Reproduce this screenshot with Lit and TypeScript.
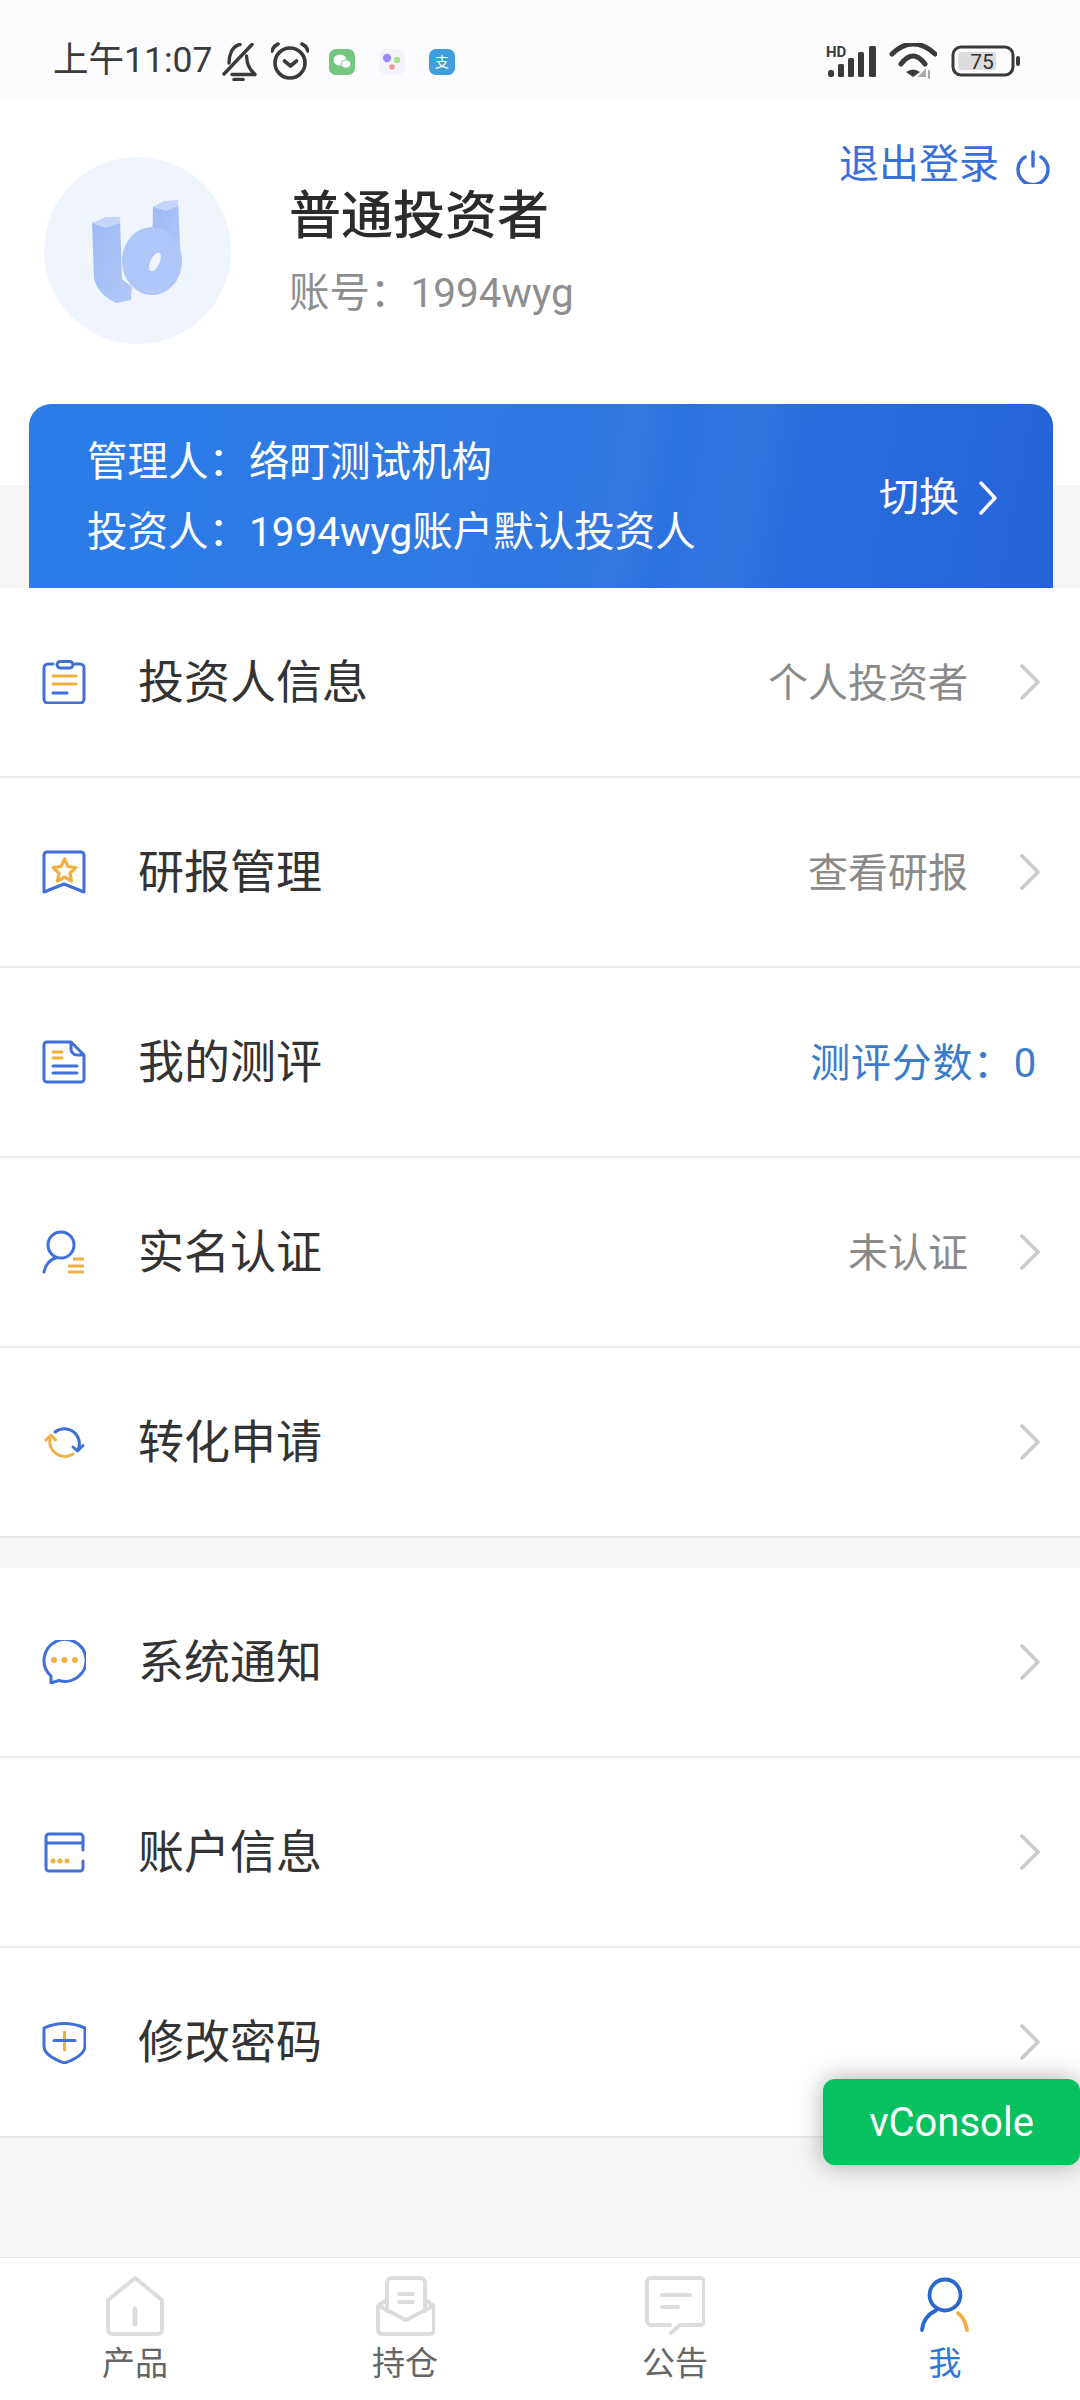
import { LitElement, html, css, svg, nothing } from "lit";
import { customElement } from "lit/decorators.js";

const B = "#3f6fd9";
const O = "#eeb13f";
const icon = (body: unknown) => html`<svg class="row-icon" viewBox="0 0 44 44" fill="none" stroke-width="3" stroke-linecap="round" stroke-linejoin="round">${body}</svg>`;

const icons = {
  clip: svg`<path stroke=${B} d="M11 4H6a4 4 0 0 0-4 4V39a4 4 0 0 0 4 4H38a4 4 0 0 0 4-4V8a4 4 0 0 0-4-4H33"/><rect stroke=${B} x="15" y="1.5" width="16" height="6.5" rx="3.2"/><path stroke=${O} d="M11 16H34M11 24H34"/><path stroke=${B} d="M11 33H25"/>`,
  book: svg`<path stroke=${B} d="M2 5a3 3 0 0 1 3-3H39a3 3 0 0 1 3 3V42L22 34 2 42Z"/><path stroke=${O} stroke-width="3.2" d="M22.500 9L26 16.500 34 17.500 28 23 29.500 31 22.500 27 15.500 31 17 23 11 17.500 19 16.500Z"/>`,
  doc: svg`<path stroke=${B} d="M29 2H5a3 3 0 0 0-3 3V39a3 3 0 0 0 3 3H39a3 3 0 0 0 3-3V15ZM29 2V9a6 6 0 0 0 6 6H42"/><path stroke=${O} d="M11 12H20M11 18H20"/><path stroke=${B} d="M11 26H35M11 33H35"/>`,
  person: svg`<circle stroke=${B} cx="19" cy="15" r="13"/><path stroke=${B} d="M2 42C3 35 8 29 15 27.500"/><path stroke=${O} stroke-linecap="butt" d="M31 29H42M26 36H42M26 42H42"/>`,
  sync: svg`<path stroke=${B} d="M13 12A15 15 0 0 1 36 30"/><path stroke=${B} d="M31 27L35.500 31 41 25.500"/><path stroke=${O} d="M8 19A15 15 0 0 0 31 34"/><path stroke=${O} d="M4 20L9 15 13.500 20"/>`,
  chat: svg`<path stroke=${B} d="M9 36A21 21 0 1 1 17 40.500L9 43Z"/><circle fill=${O} cx="12" cy="20" r="3"/><circle fill=${O} cx="22.500" cy="20" r="3"/><circle fill=${O} cx="33" cy="20" r="3"/>`,
  card: svg`<path stroke=${B} d="M41 20V7a3 3 0 0 0-3-3H7a3 3 0 0 0-3 3V38a3 3 0 0 0 3 3H38a3 3 0 0 0 3-3V31M4 13H41"/><circle fill=${O} cx="11" cy="31" r="2.500"/><circle fill=${O} cx="18" cy="31" r="2.500"/><circle fill=${O} cx="25" cy="31" r="2.500"/>`,
  shield: svg`<path stroke=${B} d="M2 8Q22 -1 43 8V26Q43 36 22.500 43Q2 36 2 26Z"/><path stroke=${O} d="M22.500 12V30"/><path stroke=${B} d="M12 20.500H33"/>`,
};

type Row = { title: string; icon: keyof typeof icons; value?: string; accent?: boolean };
const groupA: Row[] = [
  { title: "投资人信息", icon: "clip", value: "个人投资者" },
  { title: "研报管理", icon: "book", value: "查看研报" },
  { title: "我的测评", icon: "doc", value: "测评分数：0", accent: true },
  { title: "实名认证", icon: "person", value: "未认证" },
  { title: "转化申请", icon: "sync" },
];
const groupB: Row[] = [
  { title: "系统通知", icon: "chat" },
  { title: "账户信息", icon: "card" },
  { title: "修改密码", icon: "shield" },
];

@customElement("app-root")
export class AppRoot extends LitElement {
  static styles = css`
    :host {
      display: block;
      width: 1080px;
      height: 2400px;
      font-family: Roboto, "Noto Sans CJK SC", sans-serif;
    }
    .page {
      position: relative;
      height: 2400px;
      display: flex;
      flex-direction: column;
      background: #f5f5f5;
    }
    .status {
      height: 100px;
      flex: none;
      background: #fcfbfe;
      display: flex;
      align-items: center;
      padding: 24px 59px 0 53px;
      box-sizing: border-box;
      color: #3a3a3a;
    }
    .time { font-size: 35.500px; line-height: 40px; margin-top: -4px; width: 168px; white-space: nowrap; }
    .bell { width: 36px; height: 38px; margin-top: -1px; }
    .alarm { width: 38px; height: 38px; margin-left: 14px; margin-top: -2px; }
    .app { width: 26px; height: 26px; margin-top: -1px; }
    .app.wx { margin-left: 20px; }
    .app.mid { margin-left: 24px; }
    .app.ali { margin-left: 24px; }
    .status-right { margin-left: auto; display: flex; align-items: center; margin-top: -2px; }
    .signal { width: 52px; height: 36px; overflow: visible; }
    .wifi { width: 48px; height: 36px; margin-left: 11px; }
    .battery { width: 70px; height: 32px; margin-left: 14px; }
    .hero {
      flex: none;
      background: linear-gradient(#fff 385px, #f5f5f5 385px);
    }
    .head {
      height: 304px;
      box-sizing: border-box;
      padding: 0 30px 0 44px;
      display: flex;
      align-items: flex-start;
    }
    .avatar { width: 187px; height: 187px; margin-top: 57px; flex: none; }
    .info { margin: 87px 0 0 58px; }
    .name { font-size: 52px; line-height: 60px; color: #2b2b2b; font-weight: 500; }
    .acct { font-size: 40.500px; line-height: 50px; margin-top: 21px; color: #8e8e8e; }
    .logout {
      margin: 40px 0 0 auto;
      display: flex;
      align-items: center;
      gap: 17px;
      font-size: 40px;
      line-height: 50px;
      color: #3a6fd8;
    }
    .logout svg { width: 34px; height: 34px; margin-top: 4px; }
    .band {
      margin: 0 27px 0 29px;
      height: 184px;
      box-sizing: border-box;
      border-radius: 22px 22px 0 0;
      padding: 23px 55px 0 58px;
      color: #fff;
      display: flex;
      align-items: flex-start;
      justify-content: space-between;
      background:
        linear-gradient(100deg, transparent 52%, rgba(255,255,255,.035) 58%, transparent 62%, rgba(255,255,255,.04) 69%, transparent 74%),
        linear-gradient(100deg, #2b7ce8 0%, #3079e2 45%, #2463d8 100%);
    }
    .band-lines div { font-size: 40.500px; line-height: 70px; white-space: nowrap; }
    .switch {
      display: flex;
      align-items: center;
      gap: 19px;
      font-size: 40px;
      line-height: 50px;
      margin-top: 46px;
    }
    .switch svg { width: 20px; height: 36px; }
    .group { background: #fff; flex: none; }
    .group + .group { margin-top: 30px; }
    .row {
      height: 190px;
      box-sizing: border-box;
      border-bottom: 2px solid #e9e9e9;
      display: flex;
      align-items: center;
      padding: 0 40px 0 42px;
    }
    .row-icon { width: 44px; height: 44px; flex: none; }
    .title { margin: 0 0 8px 52px; font-size: 46px; color: #333; }
    .value { margin: 0 0 5px auto; font-size: 40px; color: #8a8a8a; }
    .value.accent { color: #3a7ccb; letter-spacing: .7px; margin-right: 3px; }
    .chev { width: 20px; height: 36px; margin-left: 52px; flex: none; }
    .chev.alone { margin-left: auto; }
    .spacer { flex: 1; }
    .tabs {
      flex: none;
      height: 143px;
      box-sizing: border-box;
      background: #fff;
      border-top: 1px solid #e8e8e8;
      display: grid;
      grid-template-columns: repeat(4, 270px);
    }
    .tab {
      display: flex;
      flex-direction: column;
      align-items: center;
      padding-top: 18px;
      font-size: 33px;
      line-height: 36px;
      color: #666;
    }
    .tab svg { width: 60px; height: 60px; margin-bottom: 10px; display: block; }
    .tab.on { color: #2a78d8; }
    .vconsole {
      position: absolute;
      right: 0;
      bottom: 235px;
      width: 257px;
      height: 86px;
      border-radius: 12px;
      background: #07c160;
      color: #fff;
      font-size: 40px;
      display: flex;
      align-items: center;
      justify-content: center;
      box-shadow: 0 0 26px rgba(0, 0, 0, .32);
    }
  `;

  private renderRow(r: Row) {
    return html`<div class="row">
      ${icon(icons[r.icon])}
      <span class="title">${r.title}</span>
      ${r.value ? html`<span class="value ${r.accent ? "accent" : ""}">${r.value}</span>` : nothing}
      ${r.accent ? nothing : html`<svg class="chev ${r.value ? "" : "alone"}" viewBox="0 0 20 36" fill="none" stroke="#cbcbcb" stroke-width="3.600" stroke-linecap="round" stroke-linejoin="round"><path d="M2 2L18 18 2 34"/></svg>`}
    </div>`;
  }

  render() {
    return html`<div class="page">
      <div class="status">
        <span class="time">上午11:07</span>
        <svg class="bell" viewBox="0 0 36 38" fill="none" stroke="#3a3a3a" stroke-width="3.400" stroke-linecap="round" stroke-linejoin="round">
          <path d="M3 31L31 1.500"/>
          <path d="M8 20C8 12 11 3 19 1.500"/>
          <path d="M25.500 13C26 20 27 25 34 31.500H11"/>
          <path d="M13 36.500H22"/>
        </svg>
        <svg class="alarm" viewBox="0 0 38 38" fill="none" stroke="#3a3a3a" stroke-width="3.600" stroke-linecap="round" stroke-linejoin="round">
          <circle cx="19" cy="21" r="15"/>
          <path d="M1 9Q2.500 4 7 2M31 2Q35.500 4 37 9"/>
          <path d="M13.500 19L19.500 24 25.500 19"/>
        </svg>
        <svg class="app wx" viewBox="0 0 26 26">
          <rect width="26" height="26" rx="7" fill="#74c67e"/>
          <ellipse cx="11" cy="11" rx="6.500" ry="5.500" fill="#fff"/>
          <ellipse cx="17" cy="15" rx="5" ry="4.200" fill="#fff" stroke="#74c67e"/>
        </svg>
        <svg class="app mid" viewBox="0 0 26 26">
          <rect width="26" height="26" rx="8" fill="#f6f2fb"/>
          <circle cx="8" cy="9" r="4.200" fill="#9b8cf5"/>
          <circle cx="18" cy="11" r="3.200" fill="#a5e08a"/>
          <circle cx="13" cy="18" r="2.800" fill="#ec9a9a"/>
        </svg>
        <svg class="app ali" viewBox="0 0 26 26">
          <rect width="26" height="26" rx="7" fill="#3f9edb"/>
          <text x="13" y="18" font-size="14" fill="#fff" text-anchor="middle" font-family="Noto Sans CJK SC">支</text>
        </svg>
        <div class="status-right">
          <svg class="signal" viewBox="0 0 52 36">
            <text x="0" y="14" font-size="15" font-weight="700" fill="#3a3a3a" font-family="Roboto">HD</text>
            <g fill="#3a3a3a">
              <rect x="2" y="27" width="6" height="7" rx="2.500"/>
              <rect x="12" y="21" width="6" height="13" rx="1.500"/>
              <rect x="22" y="15" width="6" height="19" rx="1.500"/>
              <rect x="32" y="9" width="6" height="25" rx="1.500"/>
              <rect x="43" y="3" width="7" height="31" rx="1.500"/>
            </g>
          </svg>
          <svg class="wifi" viewBox="0 0 48 36" fill="none" stroke="#3a3a3a" stroke-width="5" stroke-linecap="round">
            <path d="M3 11Q24 -9 46 11"/>
            <path d="M12 21Q24 5 36 21"/>
            <path d="M24 34L17 29Q24 24 31 29Z" fill="#3a3a3a" stroke="none"/>
            <path d="M31 33L36 28V33ZM40 28V35" stroke="#aaa" stroke-width="2" fill="#aaa"/>
          </svg>
          <svg class="battery" viewBox="0 0 70 32" fill="none">
            <rect x="2" y="2" width="60" height="28" rx="8" stroke="#3a3a3a" stroke-width="3"/>
            <rect x="7" y="7" width="38" height="18" rx="3" fill="#dcdcdc"/>
            <rect x="65" y="11" width="4" height="10" rx="2" fill="#3a3a3a"/>
            <text x="31" y="24" font-size="21" fill="#333" text-anchor="middle" font-family="Roboto">75</text>
          </svg>
        </div>
      </div>

      <div class="hero">
        <div class="head">
          <svg class="avatar" viewBox="0 0 187 187">
            <defs>
              <linearGradient id="lg" x1="0" y1="0" x2="1" y2="1">
                <stop offset="0" stop-color="#9db9f5"/>
                <stop offset="1" stop-color="#b2c9f8"/>
              </linearGradient>
            </defs>
            <circle cx="93.500" cy="93.500" r="93.500" fill="#f0f5fd"/>
            <path d="M48 66L76 60 78 122 88 130 87 143 72 146Q52 136 50 120Z" fill="url(#lg)"/>
            <path d="M48 66L62 71 76 66 76 60 62 60Z" fill="#c4d5fa"/>
            <path d="M109 50L134 43 137 108 132 125 110 138 108 90Z" fill="url(#lg)"/>
            <path d="M109 50L122 54 134 49 134 43 120 44Z" fill="#c4d5fa"/>
            <ellipse cx="108" cy="104" rx="30" ry="34" fill="#aec6f8"/>
            <ellipse cx="111" cy="105" rx="4.500" ry="10" transform="rotate(25 111 105)" fill="#f0f5fd"/>
          </svg>
          <div class="info">
            <div class="name">普通投资者</div>
            <div class="acct">账号：1994wyg</div>
          </div>
          <div class="logout">
            退出登录
            <svg viewBox="0 0 34 34" fill="none" stroke="#3a6fd8" stroke-width="3.400" stroke-linecap="round">
              <path d="M9 7A15 15 0 1 0 25 7"/>
              <path d="M17 2V16"/>
            </svg>
          </div>
        </div>
        <div class="band">
          <div class="band-lines">
            <div>管理人：络町测试机构</div>
            <div>投资人：1994wyg账户默认投资人</div>
          </div>
          <div class="switch">
            切换
            <svg viewBox="0 0 20 36" fill="none" stroke="#fff" stroke-width="3.400" stroke-linecap="round" stroke-linejoin="round"><path d="M3 3L17 18 3 33"/></svg>
          </div>
        </div>
      </div>

      <div class="group">${groupA.map((r) => this.renderRow(r))}</div>
      <div class="group">${groupB.map((r) => this.renderRow(r))}</div>
      <div class="spacer"></div>

      <div class="tabs">
        <div class="tab">
          <svg viewBox="0 0 60 60" fill="none" stroke="#dcdcdc" stroke-width="4" stroke-linecap="round" stroke-linejoin="round">
            <path d="M30 2L57 24V54a4 4 0 0 1-4 4H7a4 4 0 0 1-4-4V24Z"/>
            <path d="M30 33V48" stroke-width="5"/>
          </svg>
          产品
        </div>
        <div class="tab">
          <svg viewBox="0 0 60 60" fill="none" stroke="#dcdcdc" stroke-width="4" stroke-linecap="round" stroke-linejoin="round">
            <path d="M12 35V7a5 5 0 0 1 5-5H45a5 5 0 0 1 5 5V35"/>
            <path d="M24 18H38M24 26H38"/>
            <path d="M10 25L3 30V54a4 4 0 0 0 4 4H55a4 4 0 0 0 4-4V30L52 25"/>
            <path d="M4 30L31 44 58 30"/>
          </svg>
          持仓
        </div>
        <div class="tab">
          <svg viewBox="0 0 60 60" fill="none" stroke="#dcdcdc" stroke-width="4" stroke-linecap="round" stroke-linejoin="round">
            <path d="M25 49H6a4 4 0 0 1-4-4V6a4 4 0 0 1 4-4H55a4 4 0 0 1 4 4V45a4 4 0 0 1-4 4H35L26 57"/>
            <path d="M17 19H45M17 31H33"/>
          </svg>
          公告
        </div>
        <div class="tab on">
          <svg viewBox="0 0 60 60" fill="none" stroke="#2a68d0" stroke-width="3.800" stroke-linecap="round">
            <circle cx="30" cy="19" r="15.500"/>
            <path d="M7 54C8 45 13 38 21 34.500"/>
            <path d="M43 37C48 41 51 47 52 54" stroke="#eeb13f"/>
          </svg>
          我
        </div>
      </div>

      <div class="vconsole">vConsole</div>
    </div>`;
  }
}
